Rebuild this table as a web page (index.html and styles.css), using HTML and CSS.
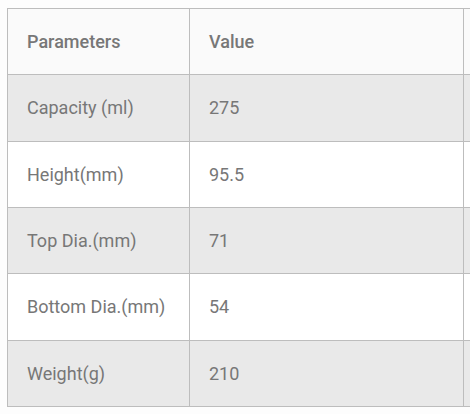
FILE: index.html
```html
<!DOCTYPE html>
<html>
<head>
<meta charset="utf-8">
<link rel="stylesheet" href="styles.css">
</head>
<body>
<div class="frame">
<table class="spec">
  <thead>
    <tr class="head"><th class="c1">Parameters</th><th class="c2">Value</th><th class="c3"></th></tr>
  </thead>
  <tbody>
    <tr class="odd"><td>Capacity (ml)</td><td>275</td><td></td></tr>
    <tr class="even"><td>Height(mm)</td><td>95.5</td><td></td></tr>
    <tr class="odd"><td>Top Dia.(mm)</td><td>71</td><td></td></tr>
    <tr class="even"><td>Bottom Dia.(mm)</td><td>54</td><td></td></tr>
    <tr class="odd"><td>Weight(g)</td><td>210</td><td></td></tr>
  </tbody>
</table>
</div>
</body>
</html>
```
FILE: styles.css
```css
html, body {
  background: #fdfdfd;
}
body {
  margin: 8px 0 0 7px;
  overflow: hidden;
  font-family: Roboto, "Liberation Sans", sans-serif;
}
.frame {
  width: 463px;
  overflow: hidden;
}
.spec {
  border-collapse: separate;
  border-spacing: 0;
  border-top: 1px solid #bdbdbd;
  border-left: 1px solid #bdbdbd;
  table-layout: fixed;
  width: 520px;
}
.spec th, .spec td {
  border-right: 1px solid #bdbdbd;
  border-bottom: 1px solid #bdbdbd;
  padding: 0 0 0 19px;
  text-align: left;
  font-size: 18px;
  color: #777;
  height: 66.33px;
  box-sizing: border-box;
  vertical-align: middle;
}
.spec th {
  font-weight: 500;
}
.spec td {
  font-weight: 400;
}
.c1 { width: 182px; }
.c2 { width: 274px; }
.head { background: #fafafa; }
.odd { background: #e9e9e9; }
.even { background: #ffffff; }
```
